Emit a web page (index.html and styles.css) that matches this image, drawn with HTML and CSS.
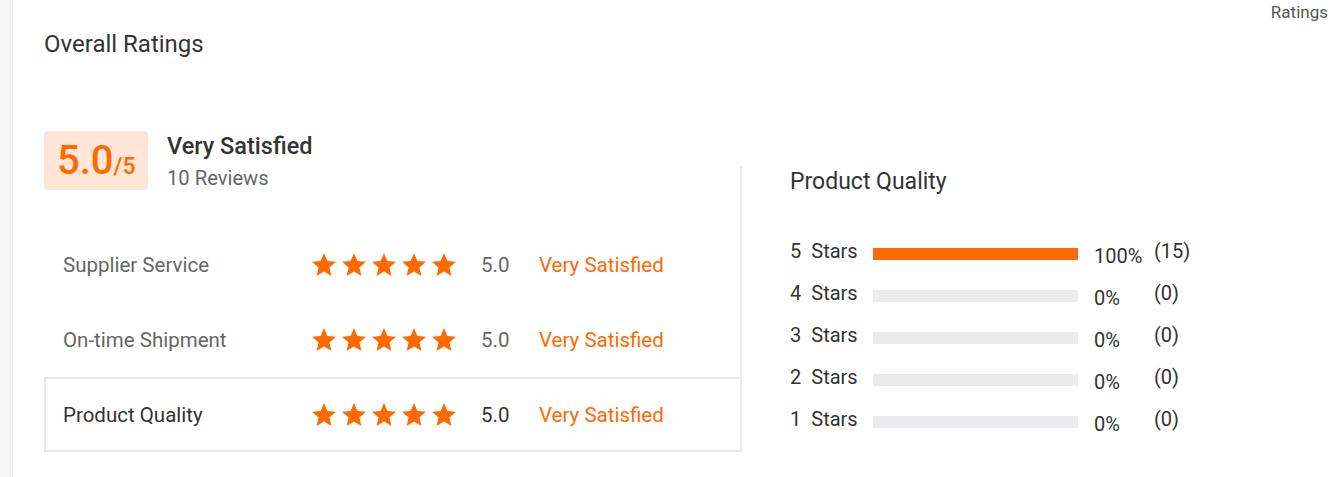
FILE: index.html
```html
<!DOCTYPE html>
<html lang="en">
<head>
<meta charset="utf-8">
<title>Overall Ratings</title>
<link rel="stylesheet" href="styles.css">
</head>
<body>
<div class="page">
  <div class="rail"></div>
  <div class="main">
    <div class="topbar"><span class="tab">Ratings</span></div>
    <h2 class="title">Overall Ratings</h2>
    <div class="content">
      <div class="left">
        <div class="summary">
          <div class="score"><span class="big">5.0</span><span class="small">/5</span></div>
          <div class="info">
            <div class="verdict">Very Satisfied</div>
            <div class="reviews">10 Reviews</div>
          </div>
        </div>
        <div class="rows">
          <div class="row">
            <span class="label">Supplier Service</span>
            <span class="stars">
              <svg class="star" viewBox="2 2 20 19"><path d="M12 17.27L18.18 21l-1.64-7.03L22 9.24l-7.19-.61L12 2 9.19 8.63 2 9.24l5.46 4.730L5.82 21z"/></svg>
              <svg class="star" viewBox="2 2 20 19"><path d="M12 17.27L18.18 21l-1.64-7.03L22 9.24l-7.19-.61L12 2 9.19 8.63 2 9.24l5.46 4.73L5.82 21z"/></svg>
              <svg class="star" viewBox="2 2 20 19"><path d="M12 17.27L18.18 21l-1.64-7.03L22 9.24l-7.19-.61L12 2 9.19 8.63 2 9.24l5.46 4.73L5.82 21z"/></svg>
              <svg class="star" viewBox="2 2 20 19"><path d="M12 17.27L18.18 21l-1.64-7.03L22 9.24l-7.19-.61L12 2 9.19 8.63 2 9.24l5.46 4.73L5.82 21z"/></svg>
              <svg class="star" viewBox="2 2 20 19"><path d="M12 17.27L18.18 21l-1.64-7.03L22 9.24l-7.19-.61L12 2 9.19 8.63 2 9.24l5.46 4.73L5.82 21z"/></svg>
            </span>
            <span class="val">5.0</span>
            <span class="sat">Very Satisfied</span>
          </div>
          <div class="row">
            <span class="label">On-time Shipment</span>
            <span class="stars">
              <svg class="star" viewBox="2 2 20 19"><path d="M12 17.27L18.18 21l-1.64-7.03L22 9.24l-7.19-.61L12 2 9.19 8.63 2 9.24l5.46 4.73L5.82 21z"/></svg>
              <svg class="star" viewBox="2 2 20 19"><path d="M12 17.27L18.18 21l-1.64-7.03L22 9.24l-7.19-.61L12 2 9.19 8.63 2 9.24l5.46 4.73L5.82 21z"/></svg>
              <svg class="star" viewBox="2 2 20 19"><path d="M12 17.27L18.18 21l-1.64-7.03L22 9.24l-7.19-.61L12 2 9.19 8.63 2 9.24l5.46 4.73L5.82 21z"/></svg>
              <svg class="star" viewBox="2 2 20 19"><path d="M12 17.27L18.18 21l-1.64-7.03L22 9.24l-7.19-.61L12 2 9.19 8.63 2 9.24l5.46 4.73L5.82 21z"/></svg>
              <svg class="star" viewBox="2 2 20 19"><path d="M12 17.27L18.18 21l-1.64-7.03L22 9.24l-7.19-.61L12 2 9.19 8.63 2 9.24l5.46 4.73L5.82 21z"/></svg>
            </span>
            <span class="val">5.0</span>
            <span class="sat">Very Satisfied</span>
          </div>
          <div class="row active">
            <span class="label">Product Quality</span>
            <span class="stars">
              <svg class="star" viewBox="2 2 20 19"><path d="M12 17.27L18.18 21l-1.64-7.03L22 9.24l-7.19-.61L12 2 9.19 8.63 2 9.24l5.46 4.73L5.82 21z"/></svg>
              <svg class="star" viewBox="2 2 20 19"><path d="M12 17.27L18.18 21l-1.64-7.03L22 9.24l-7.19-.61L12 2 9.19 8.63 2 9.24l5.46 4.73L5.82 21z"/></svg>
              <svg class="star" viewBox="2 2 20 19"><path d="M12 17.27L18.18 21l-1.64-7.03L22 9.24l-7.19-.61L12 2 9.19 8.63 2 9.24l5.46 4.73L5.82 21z"/></svg>
              <svg class="star" viewBox="2 2 20 19"><path d="M12 17.27L18.18 21l-1.64-7.03L22 9.24l-7.19-.61L12 2 9.19 8.63 2 9.24l5.46 4.73L5.82 21z"/></svg>
              <svg class="star" viewBox="2 2 20 19"><path d="M12 17.27L18.18 21l-1.64-7.03L22 9.24l-7.19-.61L12 2 9.19 8.63 2 9.24l5.46 4.73L5.82 21z"/></svg>
            </span>
            <span class="val">5.0</span>
            <span class="sat">Very Satisfied</span>
          </div>
        </div>
      </div>
      <div class="right">
        <div class="rtitle">Product Quality</div>
        <div class="dist">
          <div class="drow">
            <span class="dlabel"><span class="n">5</span>Stars</span>
            <span class="bar"><span class="fill" style="width:100%"></span></span>
            <span class="pct">100%</span>
            <span class="cnt">(15)</span>
          </div>
          <div class="drow">
            <span class="dlabel"><span class="n">4</span>Stars</span>
            <span class="bar"><span class="fill" style="width:0%"></span></span>
            <span class="pct">0%</span>
            <span class="cnt">(0)</span>
          </div>
          <div class="drow">
            <span class="dlabel"><span class="n">3</span>Stars</span>
            <span class="bar"><span class="fill" style="width:0%"></span></span>
            <span class="pct">0%</span>
            <span class="cnt">(0)</span>
          </div>
          <div class="drow">
            <span class="dlabel"><span class="n">2</span>Stars</span>
            <span class="bar"><span class="fill" style="width:0%"></span></span>
            <span class="pct">0%</span>
            <span class="cnt">(0)</span>
          </div>
          <div class="drow">
            <span class="dlabel"><span class="n">1</span>Stars</span>
            <span class="bar"><span class="fill" style="width:0%"></span></span>
            <span class="pct">0%</span>
            <span class="cnt">(0)</span>
          </div>
        </div>
      </div>
    </div>
  </div>
</div>
</body>
</html>
```
FILE: styles.css
```css
* { box-sizing: border-box; }
html, body { margin: 0; padding: 0; background: #fff; }
body {
  font-family: Roboto, "Liberation Sans", Arial, sans-serif;
  color: #333;
}
.page {
  display: flex;
  min-height: 477px;
}
.rail {
  width: 13px;
  flex: 0 0 13px;
  background: #f6f6f6;
  border-right: 1px solid #ebebeb;
}
.main {
  flex: 1;
  padding-left: 31px;
}
.topbar {
  display: flex;
  justify-content: flex-end;
  height: 24px;
  line-height: 24px;
  font-size: 17px;
  color: #555;
}
.tab { margin-right: 1px; }
.title {
  margin: 6px 0 0;
  font-size: 24px;
  font-weight: 400;
  line-height: 28px;
  color: #333;
}
.content {
  display: grid;
  grid-template-columns: 698px 1fr;
  margin-top: 73px;
}
.summary {
  display: flex;
  align-items: flex-start;
  gap: 19px;
}
.score {
  width: 104px;
  height: 59px;
  padding-left: 13px;
  background: #ffe6d6;
  border-radius: 4px;
  color: #ff6a00;
  font-size: 40px;
  font-weight: 500;
  line-height: 59px;
  white-space: nowrap;
}
.score .small {
  font-size: 23px;
  font-weight: 500;
  line-height: 1;
}
.info { padding-top: 1px; }
.verdict {
  font-size: 23.5px;
  font-weight: 500;
  line-height: 28px;
  color: #333;
}
.reviews {
  margin-top: 6px;
  font-size: 20.2px;
  line-height: 24px;
  color: #666;
}
.rows { margin-top: 37px; }
.row {
  display: flex;
  align-items: center;
  height: 75px;
  padding-left: 17px;
  border: 2px solid transparent;
  font-size: 20.5px;
  color: #666;
}
.row.active {
  border-color: #e8e8e8;
  color: #333;
}
.label { width: 249px; }
.stars {
  width: 169px;
  display: flex;
  gap: 6px;
}
.star {
  width: 24px;
  height: 23px;
  fill: #ff6a00;
  display: block;
}
.val { width: 58px; }
.sat { color: #ff6a00; }
.right {
  margin-left: -2px;
  margin-top: 36px;
  border-left: 2px solid #ebebeb;
  padding-left: 48px;
  padding-top: 2px;
}
.rtitle {
  font-size: 23px;
  line-height: 26px;
  color: #333;
}
.dist { margin-top: 35px; }
.drow {
  display: flex;
  align-items: center;
  height: 42px;
  font-size: 20px;
  color: #333;
}
.dlabel { width: 83px; }
.n { margin-right: 10px; }
.bar {
  width: 205px;
  height: 12px;
  margin-top: 5px;
  background: #ebebee;
  display: block;
}
.fill {
  display: block;
  height: 100%;
  background: #ff6a00;
}
.pct {
  width: 60px;
  margin-left: 16px;
  margin-top: 9px;
}
```
